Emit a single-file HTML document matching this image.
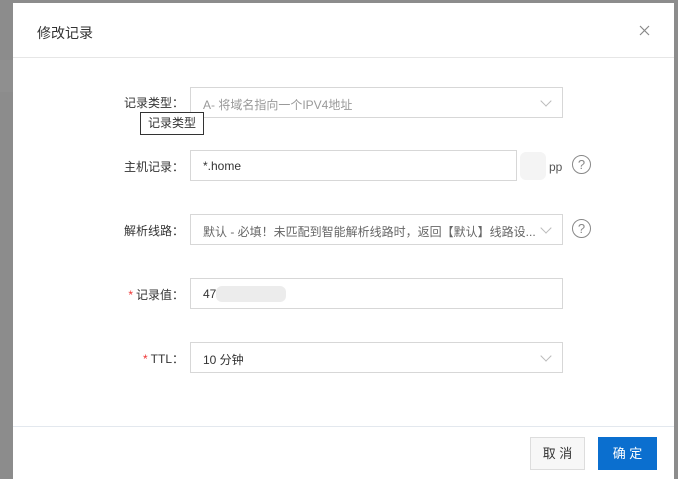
<!DOCTYPE html>
<html><head><meta charset="utf-8"><style>
body{margin:0;width:678px;height:479px;background:#8c8c8c;position:relative;overflow:hidden;font-family:"Liberation Sans","Noto Sans CJK SC",sans-serif;font-size:12px;color:#333}
.bg{position:absolute;left:0;width:13px;height:1px;background:#9a9a9a}
.dlg{position:absolute;left:13px;top:3px;width:661px;height:476px;background:#fff}
.title{position:absolute;left:24px;top:20px;font-size:14px;color:#333}
.hl{position:absolute;left:0;width:661px;height:1px;background:#e6e6e6}
.lab{position:absolute;width:171px;text-align:right;left:0;color:#333}
.inp{position:absolute;left:177px;width:371px;height:29px;border:1px solid #d7d7d7;box-sizing:content-box}
.inp span{position:absolute;left:12px;top:8px}
.chev{position:absolute;right:12px;top:9px;width:7px;height:7px;border-right:1px solid #bbb;border-bottom:1px solid #bbb;transform:rotate(45deg)}
.q{position:absolute;left:559px;width:17px;height:17px;border:1.5px solid #888;border-radius:50%;font-size:13px;text-align:center;line-height:17px;color:#888}
.req{color:#e33;margin-right:3px}
.btn{position:absolute;top:434px;height:31px;line-height:31px;text-align:center;font-size:13px}
</style></head><body>
<div class="bg" style="top:60px;height:32px;background:#8f8f8f"></div>
<div class="dlg">
<div class="title">修改记录</div>
<svg style="position:absolute;left:626px;top:22px" width="11" height="11"><path d="M1 1L10 10M10 1L1 10" stroke="#888" stroke-width="1.2"/></svg>
<div class="hl" style="top:54px"></div>
<div class="lab" style="top:91px">记录类型：</div>
<div class="inp" style="top:84px"><span style="color:#999">A- 将域名指向一个IPV4地址</span><div class="chev"></div></div>
<div style="position:absolute;left:127px;top:109px;width:62px;height:21px;border:1px solid #333;background:#fff;text-align:center;line-height:21px">记录类型</div>
<div class="lab" style="top:155px">主机记录：</div>
<div class="inp" style="top:147px;width:325px"><span>*.home</span></div>
<div style="position:absolute;left:507px;top:149px;width:26px;height:28px;background:#f4f4f4;border-radius:6px"></div>
<div style="position:absolute;left:536px;top:157px;color:#555">pp</div>
<div class="q" style="top:152px">?</div>
<div class="lab" style="top:219px">解析线路：</div>
<div class="inp" style="top:211px"><span style="color:#666">默认 - 必填！未匹配到智能解析线路时，返回【默认】线路设...</span><div class="chev"></div></div>
<div class="q" style="top:216px">?</div>
<div class="lab" style="top:283px"><span class="req">*</span>记录值：</div>
<div class="inp" style="top:275px"><span>47</span><div style="position:absolute;left:25px;top:7px;width:70px;height:16px;background:#ececec;border-radius:6px"></div></div>
<div class="lab" style="top:347px"><span class="req">*</span>TTL：</div>
<div class="inp" style="top:339px"><span>10 分钟</span><div class="chev"></div></div>
<div class="hl" style="top:423px;background:#e3e8ee"></div>
<div class="btn" style="left:517px;width:53px;border:1px solid #ddd;background:#f7f7f7;color:#333">取 消</div>
<div class="btn" style="left:585px;width:59px;height:33px;top:434px;background:#0b6fcf;color:#fff;line-height:33px">确 定</div>
</div>
</body></html>
